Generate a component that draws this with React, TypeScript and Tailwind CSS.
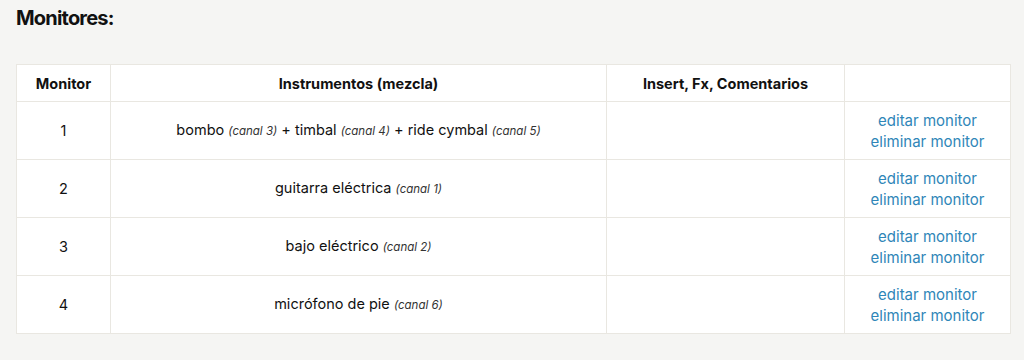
const rows = [
  {
    n: 1,
    parts: [
      ["bombo", "canal 3"],
      ["timbal", "canal 4"],
      ["ride cymbal", "canal 5"],
    ],
  },
  { n: 2, parts: [["guitarra eléctrica", "canal 1"]] },
  { n: 3, parts: [["bajo eléctrico", "canal 2"]] },
  { n: 4, parts: [["micrófono de pie", "canal 6"]] },
];

export default function App() {
  return (
    <div className="min-h-[360px] bg-[#f5f5f3] px-4 pt-[5px] font-['Inter',sans-serif] text-[#111]">
      <h2 className="text-[20px] font-bold leading-[26px] tracking-[-0.8px]">Monitores:</h2>
      <table className="mt-[33px] w-[994px] table-fixed border-collapse bg-white text-[14.5px] leading-[21px]">
        <colgroup>
          <col className="w-[94px]" />
          <col className="w-[496px]" />
          <col className="w-[238px]" />
          <col className="w-[166px]" />
        </colgroup>
        <thead>
          <tr className="h-[37px]">
            <th className="border border-[#e9e7e1] px-2 py-0 font-bold">Monitor</th>
            <th className="border border-[#e9e7e1] px-2 py-0 font-bold">Instrumentos (mezcla)</th>
            <th className="border border-[#e9e7e1] px-2 py-0 font-bold">Insert, Fx, Comentarios</th>
            <th className="border border-[#e9e7e1] px-2 py-0"></th>
          </tr>
        </thead>
        <tbody>
          {rows.map((r) => (
            <tr key={r.n} className="h-[58px]">
              <td className="border border-[#e9e7e1] px-2 py-0 text-center">{r.n}</td>
              <td className="border border-[#e9e7e1] px-2 py-0 text-center">
                {r.parts.map(([name, canal], i) => (
                  <span key={i}>
                    {i > 0 && " + "}
                    {name} <em className="text-[11.5px] text-[#333]">({canal})</em>
                  </span>
                ))}
              </td>
              <td className="border border-[#e9e7e1] px-2 py-0"></td>
              <td className="border border-[#e9e7e1] px-2 py-0 text-center text-[15px] leading-[21px] text-[#2f86b8]">
                <a className="block">editar monitor</a>
                <a className="block">eliminar monitor</a>
              </td>
            </tr>
          ))}
        </tbody>
      </table>
    </div>
  );
}
